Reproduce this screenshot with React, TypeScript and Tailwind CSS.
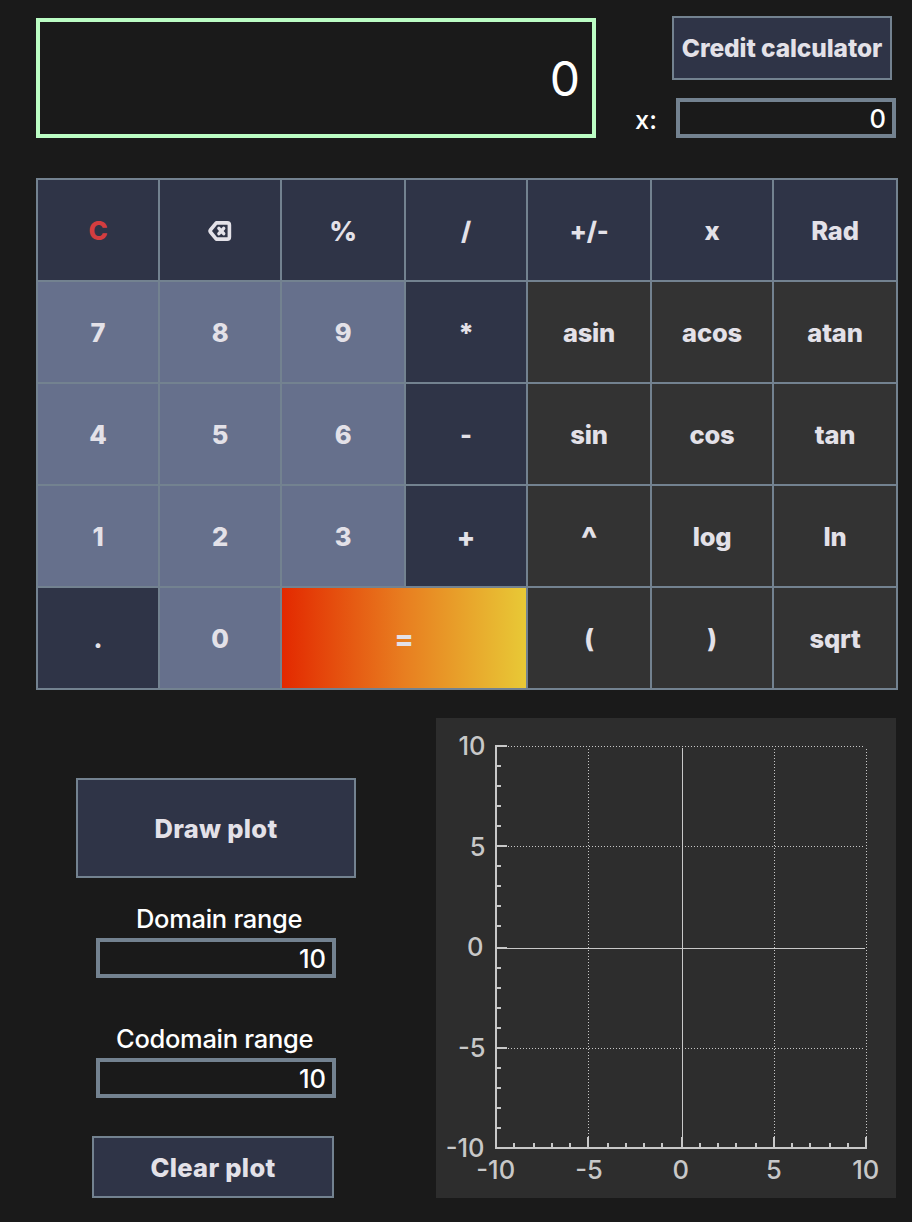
import React from "react";

type Tone = "op" | "num" | "fn" | "eq";

const tones: Record<Tone, string> = {
  op: "bg-[#2f3447]",
  num: "bg-[#66708c]",
  fn: "bg-[#333333]",
  eq: "col-span-2 bg-linear-to-r/srgb from-[#e32900] via-[#e87e20] to-[#e8c936]",
};

const keys: [string, Tone][] = [
  ["C", "op"], ["⌫", "op"], ["%", "op"], ["/", "op"], ["+/-", "op"], ["x", "op"], ["Rad", "op"],
  ["7", "num"], ["8", "num"], ["9", "num"], ["*", "op"], ["asin", "fn"], ["acos", "fn"], ["atan", "fn"],
  ["4", "num"], ["5", "num"], ["6", "num"], ["-", "op"], ["sin", "fn"], ["cos", "fn"], ["tan", "fn"],
  ["1", "num"], ["2", "num"], ["3", "num"], ["+", "op"], ["^", "fn"], ["log", "fn"], ["ln", "fn"],
  [".", "op"], ["0", "num"], ["=", "eq"], ["(", "fn"], [")", "fn"], ["sqrt", "fn"],
];

const keyText: Record<string, string> = {
  C: "text-[#d43d3f] text-[26px]",
  "^": "text-[#e3e1e8] text-[34px] pt-1.5",
  "%": "text-[#e3e1e8] text-[27px]",
  "+": "text-[#e3e1e8] text-[27px]",
  "*": "text-[#e3e1e8] text-[27px]",
  "=": "text-[#e3e1e8] text-[28px]",
};

function Backspace() {
  return (
    <svg width="24" height="20" viewBox="0 0 24 20" fill="none" stroke="#e3e1e8" strokeLinejoin="round" strokeLinecap="round">
      <path d="M8.3 1.9H19.3Q21.4 1.9 21.4 4V16Q21.4 18.1 19.3 18.1H8.3L2.4 11Q1.7 10 2.4 9Z" strokeWidth="3.6" />
      <path d="M10.9 7.3L15.7 12.7M15.7 7.3L10.9 12.7" strokeWidth="3.4" />
    </svg>
  );
}

const yTicks = [745, 765, 785, 805, 825, 845, 865, 885, 905, 925, 947, 967, 987, 1007, 1027, 1047, 1067, 1087, 1107, 1127, 1147];
const xTicks = [495, 513, 533, 551, 569, 587, 607, 625, 643, 661, 681, 699, 717, 735, 755, 773, 791, 809, 829, 847, 865];

const yLabels: [string, number, number][] = [
  ["10", 485.5, 755], ["5", 485.5, 856], ["0", 483.5, 956], ["-5", 485.5, 1057], ["-10", 484.5, 1157],
];
const xLabels: [string, number][] = [
  ["-10", 495.7], ["-5", 589], ["0", 680.7], ["5", 774], ["10", 865.8],
];

function Plot() {
  return (
    <svg className="block h-[480px] w-[460px] bg-[#2d2d2d]" viewBox="436 718 460 480">
      <g stroke="#c8c8c8" strokeWidth="1" strokeDasharray="1 2">
        <path d="M508 746.5H865M508 846.5H865M508 1048.5H865" />
        <path d="M588.5 749V1137M774.5 749V1137M866.5 749V1137" />
      </g>
      <path d="M507 948.5H865M682.5 748V1137" stroke="#c8c8c8" strokeWidth="1" />
      <g fill="#c8c8c8">
        <rect x="495" y="745" width="2" height="404" />
        <rect x="495" y="1147" width="372" height="2" />
        {yTicks.map((y, i) => (
          <rect key={y} x="497" y={y} width={i % 5 === 0 ? 10 : 4} height="2" />
        ))}
        {xTicks.map((x, i) => (
          <rect key={x} x={x} y={i % 5 === 0 ? 1137 : 1143} width="2" height={i % 5 === 0 ? 10 : 4} />
        ))}
      </g>
      <g fill="#c8c8c8" className="font-['Inter',sans-serif] text-[25.5px] font-[450]">
        {yLabels.map(([t, x, y]) => (
          <text key={t} x={x} y={y} textAnchor="end">{t}</text>
        ))}
        {xLabels.map(([t, x]) => (
          <text key={t} x={x} y="1179" textAnchor="middle">{t}</text>
        ))}
      </g>
    </svg>
  );
}

const button = "flex items-center justify-center border-2 border-[#738290] bg-[#2f3447] font-extrabold text-[#e3e1e8] whitespace-nowrap";
const field = "flex h-10 items-center justify-end border-4 border-[#738290] pt-0.5 pr-1.5 text-[25.5px] text-white";

export default function App() {
  return (
    <div className="h-[1222px] w-[912px] overflow-hidden bg-[#1a1a1a] font-['Inter',sans-serif] text-[25.5px] leading-none font-[450]">
      <header className="flex h-[178px] pl-9">
        <div className="mt-[18px] flex h-[120px] w-[560px] items-center justify-end border-4 border-[#bbfdc4] pt-0.5 pr-3 text-[48px] font-normal text-white">
          0
        </div>
        <div className="flex flex-col pt-4 pl-10">
          <button className={`${button} ml-9 h-16 w-[220px] text-[24.5px] tracking-[-0.1px]`}>Credit calculator</button>
          <div className="mt-[18px] flex">
            <span className="-ml-px w-[41px] pt-[9px] text-white">x:</span>
            <div className={`${field} w-[220px]`}>0</div>
          </div>
        </div>
      </header>

      <main className="ml-9 grid w-[862px] grid-cols-[120px_120px_122px_120px_122px_120px_122px] grid-rows-[repeat(5,100px)] gap-0.5 bg-[#738290] p-0.5">
        {keys.map(([label, tone]) => (
          <button
            key={label}
            className={`flex items-center justify-center pt-0.5 font-extrabold tracking-[-0.2px] ${tones[tone]} ${keyText[label] ?? "text-[#e3e1e8]"}`}
          >
            {label === "⌫" ? <Backspace /> : label}
          </button>
        ))}
      </main>

      <section className="flex pt-7">
        <div className="flex w-[436px] flex-col pt-[60px]">
          <button className={`${button} ml-19 h-[100px] w-[280px] pt-0.5 tracking-[0.3px]`}>Draw plot</button>
          <label className="mt-7 ml-[136px] h-8 tracking-[-0.3px] text-white">Domain range</label>
          <div className={`${field} ml-24 w-60`}>10</div>
          <label className="mt-12 ml-[116px] h-8 tracking-[-0.3px] text-white">Codomain range</label>
          <div className={`${field} ml-24 w-60`}>10</div>
          <button className={`${button} mt-[38px] ml-23 h-[62px] w-[242px] pt-0.5 tracking-[0.3px]`}>Clear plot</button>
        </div>
        <Plot />
      </section>
    </div>
  );
}
